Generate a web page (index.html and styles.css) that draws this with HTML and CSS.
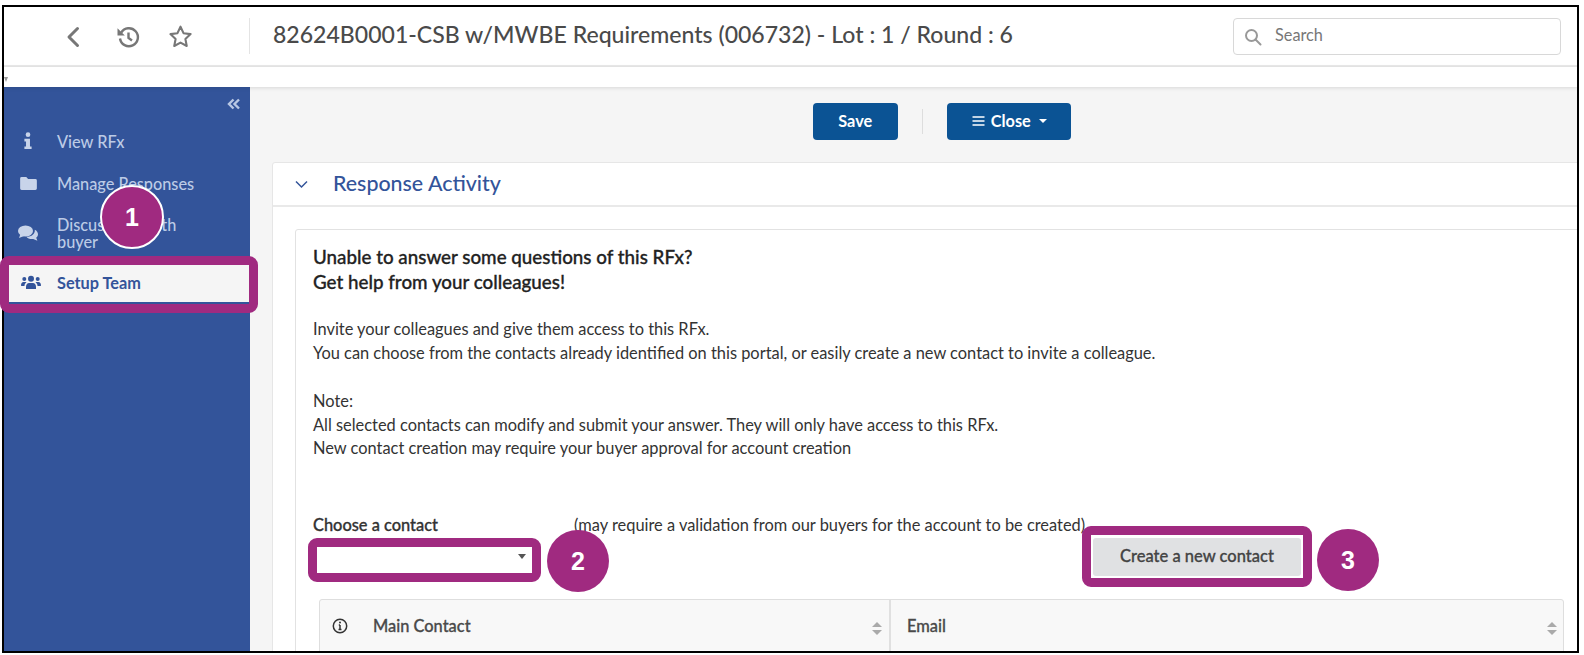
FILE: index.html
```html
<!DOCTYPE html>
<html lang="en">
<head>
<meta charset="utf-8">
<title>Setup Team</title>
<link rel="stylesheet" href="styles.css">
</head>
<body>
<div class="shot">
  <div class="screen">
  <header class="topbar">
    <div class="tools">
      <svg class="ic-back" viewBox="0 0 14 22"><path d="M11.5 2.5 3 11l8.5 8.5"/></svg>
      <svg class="ic-hist" viewBox="0 0 24 24"><path d="M5.2 7.6A9 9 0 1 1 4 13.5"/><path class="fill" d="M1.5 3.2v7.3h7.3z"/><path d="M12.5 7.5v5.5l3.5 2.5"/></svg>
      <svg class="ic-star" viewBox="0 0 24 24"><path d="m12 2.6 2.9 6.2 6.8.9-5 4.7 1.3 6.7-6-3.3-6 3.3 1.3-6.7-5-4.7 6.8-.9z"/></svg>
    </div>
    <h1 class="title">82624B0001-CSB w/MWBE Requirements (006732) - Lot : 1 / Round : 6</h1>
    <div class="search">
      <svg viewBox="0 0 18 18"><circle cx="7.5" cy="7.5" r="5.5"/><path d="m11.5 11.5 5 5"/></svg>
      <span>Search</span>
    </div>
  </header>
  <div class="subbar"><i class="subcaret"></i></div>
  <div class="layout">
    <aside class="sidebar">
      <div class="collapse">
        <svg viewBox="0 0 14 12"><path d="M6.5 1.5 2 6l4.5 4.5M12 1.5 7.5 6l4.5 4.5"/></svg>
      </div>
      <nav class="nav">
        <a class="nav-item item-view">
          <span class="nav-ic"><svg viewBox="0 0 10 20" width="10" height="18"><circle cx="5" cy="3" r="2.6"/><path d="M1 7.5h6.2V16H9v3H1v-3h1.8v-5.5H1z"/></svg></span>
          <span>View RFx</span>
        </a>
        <a class="nav-item item-manage">
          <span class="nav-ic"><svg viewBox="0 0 18 14" width="17" height="13"><path d="M1.6 0h5l2 2.200h7.800A1.600 1.600 0 0 1 18 3.800v8.600a1.600 1.600 0 0 1-1.600 1.600H1.600A1.600 1.600 0 0 1 0 12.400V1.600A1.600 1.600 0 0 1 1.600 0z"/></svg></span>
          <span>Manage Responses</span>
        </a>
        <a class="nav-item item-discuss">
          <span class="nav-ic"><svg viewBox="0 0 20 16" width="20" height="16"><ellipse cx="7.500" cy="6" rx="7.500" ry="5.600"/><path d="m2.500 9-1.500 4 5-2z"/><path d="M16.800 4.700c2 1 3.200 2.700 3.200 4.500 0 1.400-.7 2.600-1.800 3.500l1.200 3-4.200-1.700c-3 .4-5.600-.6-6.800-2.300 4.800.2 9-2.700 8.400-7z"/></svg></span>
          <span>Discussions with<br>buyer</span>
        </a>
        <a class="nav-item item-team">
          <span class="nav-ic"><svg viewBox="0 0 20 14" width="20" height="14"><circle cx="10" cy="3.800" r="3"/><circle cx="3.300" cy="4" r="2"/><circle cx="16.700" cy="4" r="2"/><path d="M5 14v-2.200C5 9.300 6.500 8 8 8h4c1.500 0 3 1.300 3 3.800V14z"/><path d="M0 10.500C0 8.500 1 7 2.500 7h2c.4 0 .8.100 1 .3C4.200 8.200 3.500 9.500 3.500 11H1a1 1 0 0 1-1-.5zM20 10.500c0-2-1-3.500-2.500-3.500h-2c-.4 0-.8.100-1 .3 1.300.9 2 2.200 2 3.700H19a1 1 0 0 0 1-.5z"/></svg></span>
          <span>Setup Team</span>
        </a>
      </nav>
    </aside>
    <main class="main">
      <div class="toolbar">
        <button class="btn btn-save">Save</button>
        <span class="tool-sep"></span>
        <button class="btn btn-close">
          <svg viewBox="0 0 12 10" width="13" height="10"><path d="M0 1h12M0 5h12M0 9h12"/></svg>
          Close
          <i class="caret"></i>
        </button>
      </div>
      <section class="panel">
        <div class="panel-head">
          <svg viewBox="0 0 14 9" width="15" height="9"><path d="m1.500 1.500 5.500 5.500 5.500-5.500"/></svg>
          <h2>Response Activity</h2>
        </div>
        <div class="panel-body">
          <div class="card">
            <p class="lead">Unable to answer some questions of this RFx?<br>Get help from your colleagues!</p>
            <p class="copy">Invite your colleagues and give them access to this RFx.<br>You can choose from the contacts already identified on this portal, or easily create a new contact to invite a colleague.</p>
            <p class="copy">Note:<br>All selected contacts can modify and submit your answer. They will only have access to this RFx.<br>New contact creation may require your buyer approval for account creation</p>
            <div class="contact-row">
              <div class="contact-col">
                <label class="contact-label">Choose a contact</label>
                <div class="select"><i class="select-caret"></i></div>
              </div>
              <p class="contact-note">(may require a validation from our buyers for the account to be created)</p>
              <button class="btn-create">Create a new contact</button>
            </div>
            <div class="table">
              <div class="th th-main">
                <svg class="ic-info" viewBox="0 0 16 16" width="16" height="16"><circle cx="8" cy="8" r="6.700"/><path d="M8 7v4.500M6.500 11.500h3M6.800 7H8"/><circle class="dot" cx="8" cy="4.600" r="1"/></svg>
                <span class="th-label">Main Contact</span>
                <i class="sort"></i>
              </div>
              <div class="th th-mail">
                <span class="th-label">Email</span>
                <i class="sort"></i>
              </div>
            </div>
          </div>
        </div>
      </section>
    </main>
  </div>
  </div>

  <div class="mark mark-team"></div>
  <div class="mark mark-select"></div>
  <div class="mark mark-create"></div>
  <div class="badge badge-1">1</div>
  <div class="badge badge-2">2</div>
  <div class="badge badge-3">3</div>
</div>
</body>
</html>
```

FILE: styles.css
```css
* { box-sizing: border-box; }
html, body { margin: 0; height: 100%; background: #fff; overflow: hidden; }
body { font-family: Lato, "Open Sans", sans-serif; color: #333; }

.shot {
  position: relative;
  width: 1577px;
  height: 648px;
  margin: 5px 0 0 2px;
  border: 2px solid #000;
}
.screen {
  height: 100%;
  overflow: hidden;
  background: #fff;
  display: flex;
  flex-direction: column;
}

/* top bar */
.topbar {
  flex: none;
  height: 60px;
  display: flex;
  align-items: center;
  border-bottom: 2px solid #e9e9e9;
  position: relative;
}
.tools {
  width: 246px;
  height: 36px;
  flex: none;
  display: flex;
  align-items: center;
  border-right: 1px solid #e4e4e4;
  margin-top: -1px;
}
.tools svg { fill: none; stroke: #777; margin-top: 2px; }
.ic-back { width: 14px; height: 22px; margin-left: 62px; stroke-width: 3; stroke-linecap: round; stroke-linejoin: round; }
.ic-hist { width: 24px; height: 24px; margin-left: 36px; stroke-width: 2.400; }
.tools .ic-hist .fill { fill: #777; stroke: none; }
.ic-star { width: 25px; height: 25px; margin-left: 28px; stroke-width: 2; stroke-linejoin: round; }
.title {
  margin: -4px 0 0 23px;
  font-size: 23.050px;
  font-weight: 500;
  color: #4a4a4a;
  white-space: nowrap;
  flex: none;
}
.search {
  position: absolute;
  left: 1229px;
  top: 11px;
  width: 328px;
  height: 37px;
  border: 1px solid #d8d8d8;
  border-radius: 4px;
  display: flex;
  align-items: center;
  padding-left: 10px;
  font-size: 16.300px;
  color: #777;
}
.search svg { width: 18px; height: 18px; fill: none; stroke: #999; stroke-width: 2; stroke-linecap: round; margin-right: 13px; }
.search span { margin-top: -5px; }
.subbar {
  flex: none;
  height: 20px;
  position: relative;
  z-index: 2;
  box-shadow: 0 1px 4px rgba(0,0,0,.12);
  background: #fff;
}
.subcaret {
  position: absolute;
  left: 0;
  top: 10px;
  width: 0;
  height: 0;
  border-top: 5px solid #999;
  border-left: 2px solid transparent;
  border-right: 2px solid transparent;
}

.layout { flex: 1; display: flex; min-height: 0; }

/* sidebar */
.sidebar {
  flex: none;
  width: 246px;
  background: #33549a;
  color: #bccbe6;
  font-size: 16.300px;
  font-weight: 500;
}
.collapse { display: flex; justify-content: flex-end; padding: 11px 9px 0 0; height: 30px; }
.collapse svg { width: 14px; height: 12px; fill: none; stroke: #b9c8e4; stroke-width: 2.400; }
.nav { display: flex; flex-direction: column; }
.nav-item { display: flex; align-items: center; line-height: 17px; }
.nav-ic { width: 53px; flex: none; display: flex; justify-content: center; padding-right: 5px; }
.nav-ic svg { fill: #c8d4ea; }
.item-view { height: 44px; margin-top: 2px; }
.item-manage { height: 41px; }
.item-discuss { height: 57px; }
.item-team {
  height: 40px;
  margin: 1px 0 0 5px;
  color: #33549a;
  font-weight: 700;
  background: #f5f5f5;
}
.item-team .nav-ic { width: 48px; }
.item-team svg { fill: #33549a; }

/* main */
.main {
  flex: none;
  width: 1384px;
  background: #f5f5f5;
}
.toolbar {
  display: flex;
  justify-content: center;
  align-items: flex-start;
  padding-top: 16px;
  height: 75px;
}
.btn {
  height: 37px;
  border: 0;
  border-radius: 4px;
  background: #0b5394;
  color: #fff;
  font: 700 16.300px Lato, sans-serif;
  display: inline-flex;
  align-items: center;
  justify-content: center;
  padding: 0 0 2px;
}
.btn-save { width: 85px; }
.btn-close { width: 124px; gap: 6px; }
.btn-close svg { fill: none; stroke: #fff; stroke-width: 1.600; }
.caret { width: 0; height: 0; margin-left: 2px; border-top: 4px solid #fff; border-left: 4px solid transparent; border-right: 4px solid transparent; }
.tool-sep { width: 1px; height: 25px; background: #ddd; margin: 6px 24.500px 0 24px; }

.panel {
  margin: 0 22px;
  background: #fff;
  border: 1px solid #e6e6e6;
  border-radius: 3px 3px 0 0;
}
.panel-head {
  height: 44px;
  display: flex;
  align-items: center;
  border-bottom: 2px solid #e9e9e9;
  padding-left: 21px;
}
.panel-head svg { fill: none; stroke: #33549a; stroke-width: 1.500; flex: none; }
.panel-head h2 { margin: -3px 0 0 24px; font-size: 21.400px; font-weight: 500; color: #33549a; }
.panel-body { padding: 22px 22px 0 22px; }
.card {
  height: 500px;
  border: 1px solid #e2e2e2;
  border-radius: 3px;
  padding: 14px 22px 0 17px;
}
.lead { margin: 0; font-size: 18.800px; font-weight: 500; line-height: 25px; color: #222; -webkit-text-stroke: .3px #222; }
.copy { margin: 0; font-size: 16.400px; line-height: 23.700px; }
.lead + .copy { margin-top: 23px; }
.copy + .copy { margin-top: 24.500px; }
.contact-row { display: flex; align-items: flex-start; margin-top: 54.500px; height: 84px; position: relative; }
.contact-col { width: 218px; flex: none; }
.contact-label { display: block; font-size: 16.400px; font-weight: 500; line-height: 20px; -webkit-text-stroke: .3px #333; }
.select {
  position: relative;
  height: 26px;
  margin: 12px 0 0 4px;
  background: #fff;
}
.select-caret { position: absolute; right: 5px; top: 7px; border-top: 5px solid #555; border-left: 4px solid transparent; border-right: 4px solid transparent; }
.contact-note { margin: 0 0 0 43px; font-size: 16.400px; line-height: 20px; white-space: nowrap; flex: none; width: 532px; }
.btn-create {
  flex: none;
  position: relative;
  top: 23px;
  margin-left: -13px;
  width: 208px;
  height: 38px;
  padding: 0 0 2px;
  border: 0;
  border-radius: 3px;
  background: #e0e1e3;
  color: #444;
  font: 500 16.500px Lato, sans-serif;
  -webkit-text-stroke: .3px #444;
}
.table {
  display: grid;
  grid-template-columns: 571px 673px;
  margin-left: 6px;
  width: 1245px;
  height: 60px;
  background: #f8f8f8;
  border: 1px solid #dedede;
  border-radius: 3px 3px 0 0;
}
.th { position: relative; display: flex; align-items: center; height: 58px; padding-bottom: 6px; font-size: 16.400px; font-weight: 500; color: #4a4a4a; -webkit-text-stroke: .3px #4a4a4a; }
.th-main { padding-left: 12px; border-right: 2px solid #e0e0e0; }
.ic-info { fill: none; stroke: #333; stroke-width: 1.500; flex: none; margin-right: 25px; }
.ic-info .dot { fill: #333; stroke: none; }
.th-mail { padding-left: 16px; }
.sort { position: absolute; right: 7px; top: 22px; width: 10px; height: 13px; }
.sort::before, .sort::after { content: ""; position: absolute; left: 0; border-left: 5px solid transparent; border-right: 5px solid transparent; }
.sort::before { top: 0; border-bottom: 5px solid #aaa; }
.sort::after { bottom: 0; border-top: 5px solid #aaa; }

/* annotations */
.mark { position: absolute; border: 9px solid #a02a80; border-radius: 9px; }
.mark-team { left: -4px; top: 249px; width: 258px; height: 57px; }
.mark-select { left: 304px; top: 531px; width: 233px; height: 44px; }
.mark-create { left: 1078px; top: 519px; width: 230px; height: 61px; }
.badge {
  position: absolute;
  width: 62px;
  height: 62px;
  border-radius: 50%;
  background: #a02a80;
  color: #fff;
  font: 700 25px/62px "Liberation Sans", Arial, sans-serif;
  text-align: center;
}
.badge-1 { left: 96px; top: 178px; width: 64px; height: 64px; line-height: 60px; border: 2px solid #fff; }
.badge-2 { left: 543px; top: 523px; }
.badge-3 { left: 1313px; top: 522px; }
```
